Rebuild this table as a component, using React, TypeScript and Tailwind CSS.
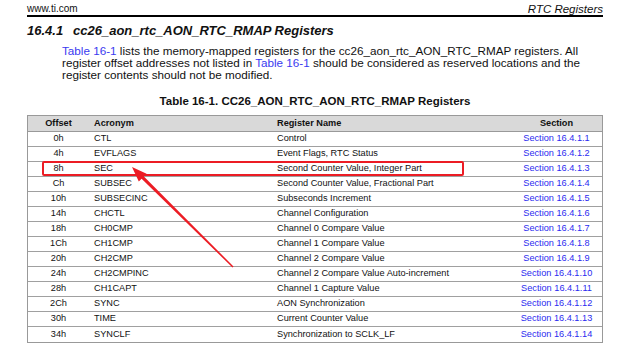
const ROWS = [
  { offset: '0h', acronym: 'CTL', name: 'Control', section: '16.4.1.1' },
  { offset: '4h', acronym: 'EVFLAGS', name: 'Event Flags, RTC Status', section: '16.4.1.2' },
  { offset: '8h', acronym: 'SEC', name: 'Second Counter Value, Integer Part', section: '16.4.1.3' },
  { offset: 'Ch', acronym: 'SUBSEC', name: 'Second Counter Value, Fractional Part', section: '16.4.1.4' },
  { offset: '10h', acronym: 'SUBSECINC', name: 'Subseconds Increment', section: '16.4.1.5' },
  { offset: '14h', acronym: 'CHCTL', name: 'Channel Configuration', section: '16.4.1.6' },
  { offset: '18h', acronym: 'CH0CMP', name: 'Channel 0 Compare Value', section: '16.4.1.7' },
  { offset: '1Ch', acronym: 'CH1CMP', name: 'Channel 1 Compare Value', section: '16.4.1.8' },
  { offset: '20h', acronym: 'CH2CMP', name: 'Channel 2 Compare Value', section: '16.4.1.9' },
  { offset: '24h', acronym: 'CH2CMPINC', name: 'Channel 2 Compare Value Auto-increment', section: '16.4.1.10' },
  { offset: '28h', acronym: 'CH1CAPT', name: 'Channel 1 Capture Value', section: '16.4.1.11' },
  { offset: '2Ch', acronym: 'SYNC', name: 'AON Synchronization', section: '16.4.1.12' },
  { offset: '30h', acronym: 'TIME', name: 'Current Counter Value', section: '16.4.1.13' },
  { offset: '34h', acronym: 'SYNCLF', name: 'Synchronization to SCLK_LF', section: '16.4.1.14' },
];

export default function App() {
  return (
    <div className="relative w-[640px] h-[356px] overflow-hidden bg-white text-[#111] font-['Liberation_Sans',Arial,sans-serif]">
      <div className="ml-[27px] w-[576px]">
        {/* page header */}
        <div className="flex items-end justify-between pt-[3px] border-b-2 border-black">
          <span className="text-[10px] leading-[12px]">www.ti.com</span>
          <span className="text-[11.5px] leading-[12px] italic">RTC Registers</span>
        </div>

        <h2 className="mt-[6px] flex text-[13px] leading-[16px] font-bold italic">
          <span className="w-[46px]">16.4.1</span>
          <span>cc26_aon_rtc_AON_RTC_RMAP Registers</span>
        </h2>

        <p className="mt-[6px] ml-[35px] text-[11.7px] leading-[12px] whitespace-nowrap">
          <span className="text-[#3a3af0]">Table 16-1</span> lists the memory-mapped registers for the
          cc26_aon_rtc_AON_RTC_RMAP registers. All
          <br />
          register offset addresses not listed in <span className="text-[#3a3af0]">Table 16-1</span>{' '}
          should be considered as reserved locations and the
          <br />
          register contents should not be modified.
        </p>

        <div className="mt-[13px] text-center text-[11.5px] leading-[14px] font-bold">
          Table 16-1. CC26_AON_RTC_AON_RTC_RMAP Registers
        </div>

        {/* register table */}
        <div className="mt-[7px] border border-[#999] text-[9.2px]">
          <div className="grid grid-cols-[61px_182px_240px_1fr] h-[16px] items-center bg-[#d9d9d9] border-b border-[#999] font-bold leading-none">
            <span className="text-center">Offset</span>
            <span className="pl-[5px]">Acronym</span>
            <span className="pl-[6px]">Register Name</span>
            <span className="text-center">Section</span>
          </div>
          {ROWS.map((r, i) => (
            <div
              key={r.offset}
              className={`grid grid-cols-[61px_182px_240px_1fr] h-[15px] items-center leading-none ${
                i < ROWS.length - 1 ? 'border-b border-[#a0a0a0]' : ''
              }`}
            >
              <span className="text-center">{r.offset}</span>
              <span className="pl-[5px]">{r.acronym}</span>
              <span className="pl-[6px]">{r.name}</span>
              <span className="text-center text-[#2b2bf0]">Section {r.section}</span>
            </div>
          ))}
        </div>
      </div>

      {/* red annotation box */}
      <div className="absolute left-[42px] top-[161px] w-[422px] h-[15px] border-2 border-[#ec1c24] rounded-[2px]" />

      {/* red arrow */}
      <svg className="absolute left-0 top-0" width="640" height="356" viewBox="0 0 640 356">
        <polygon
          fill="#ec1c24"
          points="132,167 146.6,173.7 143.9,176.4 233.5,266.5 232.5,267.5 141.6,178.7 138.8,181.5"
        />
      </svg>
    </div>
  );
}
